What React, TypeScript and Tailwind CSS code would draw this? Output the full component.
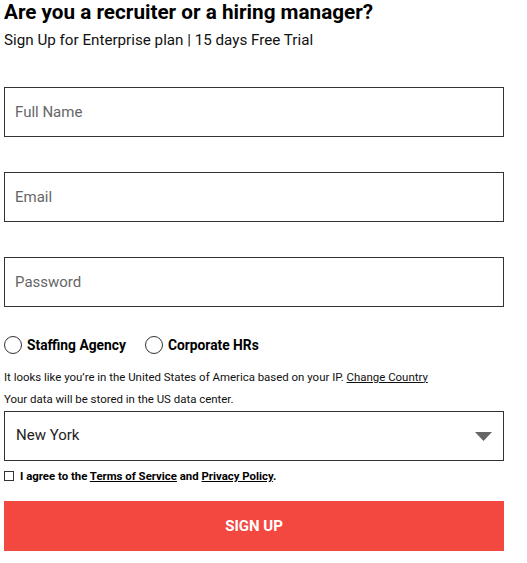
import { useState } from "react";

const font = { fontFamily: "Roboto, 'Liberation Sans', sans-serif" };

function Field({ placeholder, type = "text" }: { placeholder: string; type?: string }) {
  return (
    <input
      type={type}
      placeholder={placeholder}
      className="block h-[50px] w-[500px] border border-[#333] px-[10px] text-[15px] text-[#333] outline-none placeholder:text-[#666]"
    />
  );
}

function Radio({ label, checked, onClick }: { label: string; checked: boolean; onClick: () => void }) {
  return (
    <button type="button" onClick={onClick} className="flex items-center gap-[5px]">
      <span className="flex h-[18px] w-[18px] items-center justify-center rounded-full border border-[#333] bg-white">
        {checked && <span className="h-[8px] w-[8px] rounded-full bg-[#333]" />}
      </span>
      <span className="text-[13.8px] font-bold text-black">{label}</span>
    </button>
  );
}

export default function App() {
  const [kind, setKind] = useState<"staffing" | "corporate" | null>(null);
  const [agree, setAgree] = useState(false);

  return (
    <div className="w-[527px] bg-white px-[4px] text-black" style={font}>
      <h1 className="text-[20.7px] font-bold leading-[24px]">Are you a recruiter or a hiring manager?</h1>
      <p className="mt-[6px] text-[15.2px] leading-[20px] text-[#111]">Sign Up for Enterprise plan | 15 days Free Trial</p>

      <div className="mt-[37px] flex flex-col gap-[35px]">
        <Field placeholder="Full Name" />
        <Field placeholder="Email" />
        <Field placeholder="Password" type="password" />
      </div>

      <div className="mt-[28px] flex items-center gap-[19px]">
        <Radio label="Staffing Agency" checked={kind === "staffing"} onClick={() => setKind("staffing")} />
        <Radio label="Corporate HRs" checked={kind === "corporate"} onClick={() => setKind("corporate")} />
      </div>

      <p className="mt-[14px] text-[11.45px] leading-[14px] text-[#111]">
        It looks like you’re in the United States of America based on your IP.{" "}
        <a className="underline">Change Country</a>
      </p>
      <p className="mt-[8px] text-[11.45px] leading-[14px] text-[#111]">Your data will be stored in the US data center.</p>

      <div className="relative mt-[5px] h-[50px] w-[500px] border border-[#333]">
        <div className="flex h-full items-center px-[11px] text-[15px] text-[#222]">New York</div>
        <svg className="absolute right-[11px] top-[20px]" width="17" height="9" viewBox="0 0 17 9">
          <path d="M0 0 H17 L8.5 9 Z" fill="#666" />
        </svg>
      </div>

      <label className="mt-[7px] flex items-center gap-[6px] text-[11.4px] font-bold">
        <span
          onClick={() => setAgree(!agree)}
          className="flex h-[10px] w-[10px] items-center justify-center border border-[#333] bg-white"
        >
          {agree && <span className="h-[6px] w-[6px] bg-[#333]" />}
        </span>
        <span>
          I agree to the <a className="underline">Terms of Service</a> and <a className="underline">Privacy Policy</a>.
        </span>
      </label>

      <button
        type="button"
        className="mt-[16px] flex h-[50px] w-[500px] items-center justify-center bg-[#f2483f] text-[15px] font-bold text-white"
      >
        SIGN UP
      </button>
    </div>
  );
}
